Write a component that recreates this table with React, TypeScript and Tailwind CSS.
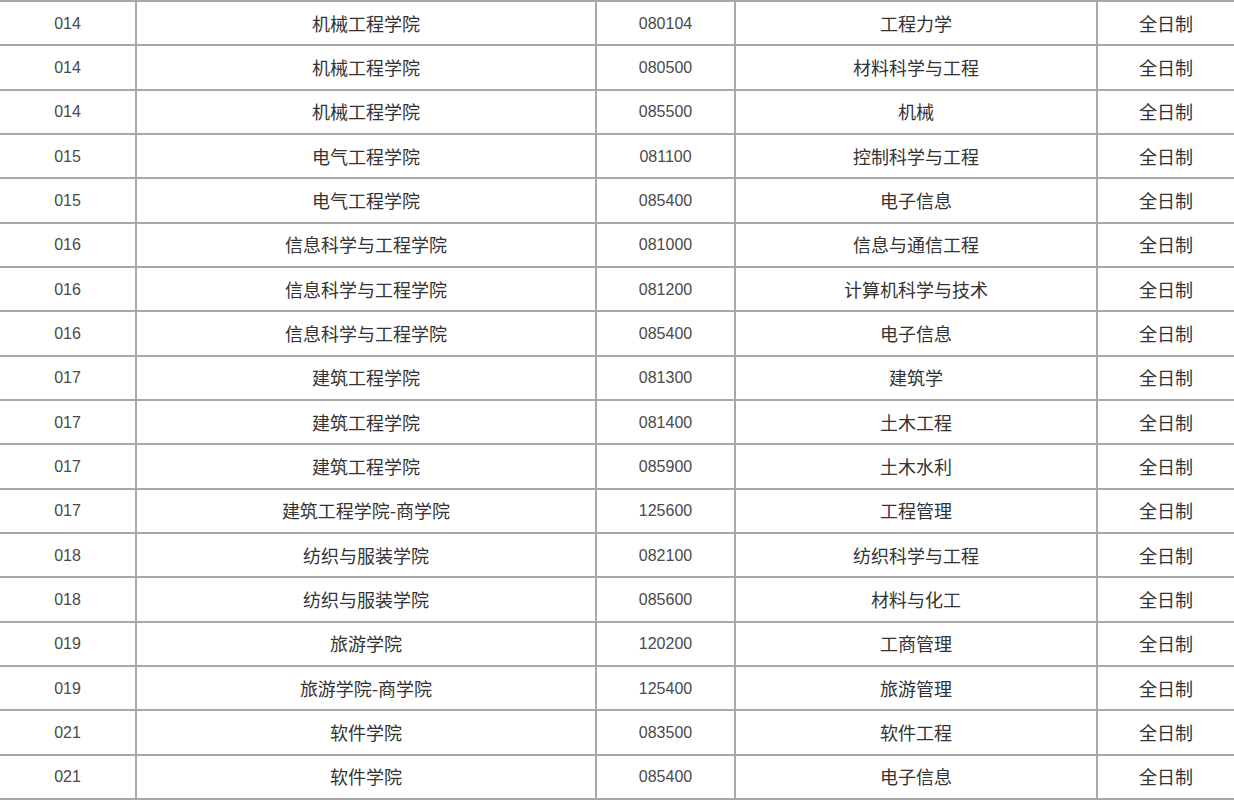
import React from "react";

type Row = { no: string; school: string; code: string; major: string; kind: string };

const rows: Row[] = [
  { no: "014", school: "机械工程学院", code: "080104", major: "工程力学", kind: "全日制" },
  { no: "014", school: "机械工程学院", code: "080500", major: "材料科学与工程", kind: "全日制" },
  { no: "014", school: "机械工程学院", code: "085500", major: "机械", kind: "全日制" },
  { no: "015", school: "电气工程学院", code: "081100", major: "控制科学与工程", kind: "全日制" },
  { no: "015", school: "电气工程学院", code: "085400", major: "电子信息", kind: "全日制" },
  { no: "016", school: "信息科学与工程学院", code: "081000", major: "信息与通信工程", kind: "全日制" },
  { no: "016", school: "信息科学与工程学院", code: "081200", major: "计算机科学与技术", kind: "全日制" },
  { no: "016", school: "信息科学与工程学院", code: "085400", major: "电子信息", kind: "全日制" },
  { no: "017", school: "建筑工程学院", code: "081300", major: "建筑学", kind: "全日制" },
  { no: "017", school: "建筑工程学院", code: "081400", major: "土木工程", kind: "全日制" },
  { no: "017", school: "建筑工程学院", code: "085900", major: "土木水利", kind: "全日制" },
  { no: "017", school: "建筑工程学院-商学院", code: "125600", major: "工程管理", kind: "全日制" },
  { no: "018", school: "纺织与服装学院", code: "082100", major: "纺织科学与工程", kind: "全日制" },
  { no: "018", school: "纺织与服装学院", code: "085600", major: "材料与化工", kind: "全日制" },
  { no: "019", school: "旅游学院", code: "120200", major: "工商管理", kind: "全日制" },
  { no: "019", school: "旅游学院-商学院", code: "125400", major: "旅游管理", kind: "全日制" },
  { no: "021", school: "软件学院", code: "083500", major: "软件工程", kind: "全日制" },
  { no: "021", school: "软件学院", code: "085400", major: "电子信息", kind: "全日制" },
];

// 数字列 / 中文列
const num = "font-['Liberation_Sans',sans-serif] text-[16px] text-[#4a4a4a] pt-px";
const cjk = "font-['Noto_Sans_CJK_SC',sans-serif] text-[18px] text-[#333]";

export default function App() {
  return (
    <div className="w-[1234px] h-[800px] bg-white flex flex-col border-t-2 border-[#a8a8a8] overflow-hidden">
      {rows.map((r, i) => (
        <div
          key={i}
          className="flex-1 grid grid-cols-[137px_460px_139px_362px_136px] border-b-2 border-[#a8a8a8]"
        >
          <div className={`flex items-center justify-center border-r-2 border-[#a8a8a8] ${num}`}>{r.no}</div>
          <div className={`flex items-center justify-center border-r-2 border-[#a8a8a8] ${cjk}`}>{r.school}</div>
          <div className={`flex items-center justify-center border-r-2 border-[#a8a8a8] ${num}`}>{r.code}</div>
          <div className={`flex items-center justify-center border-r-2 border-[#a8a8a8] ${cjk}`}>{r.major}</div>
          <div className={`flex items-center justify-center ${cjk}`}>{r.kind}</div>
        </div>
      ))}
    </div>
  );
}
